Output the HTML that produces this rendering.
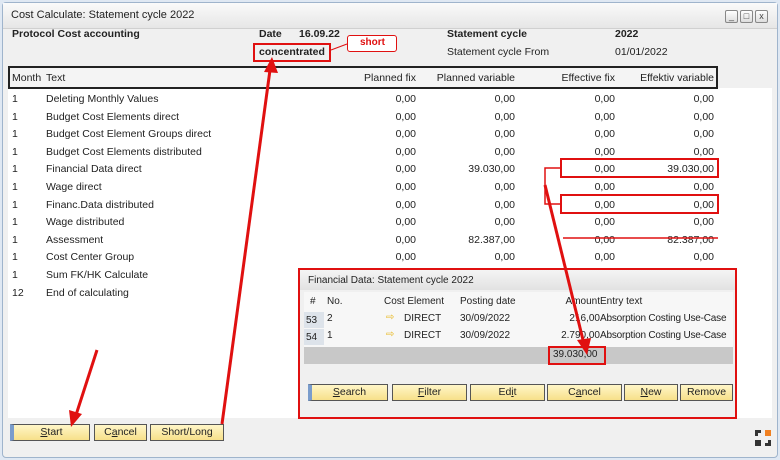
<!DOCTYPE html>
<html><head><style>
*{margin:0;padding:0;box-sizing:border-box}
body{width:780px;height:460px;background:#dfe8f3;font-family:"Liberation Sans",sans-serif;font-size:10.5px;color:#222;position:relative;overflow:hidden}
.win{position:absolute;left:2px;top:2px;width:776px;height:456px;background:#f0f0f0;border:1px solid #9fb4cc;border-radius:4px}
.title{position:absolute;left:0;top:0;width:100%;height:26px;background:linear-gradient(#fafafa,#e6e6e6);border-bottom:1px solid #d0d0d0}
.t{position:absolute;white-space:nowrap}
.b{font-weight:bold}
.r{text-align:right}
.wb{position:absolute;top:7px;width:13px;height:13px;border:1px solid #888;background:linear-gradient(#fff,#ddd);border-radius:2px;font-size:9px;text-align:center;line-height:11px;color:#444}
.white{position:absolute;left:8px;top:88px;width:764px;height:330px;background:#fff}
.hdr{position:absolute;left:8px;top:66px;width:710px;height:23px;border:2px solid #222;background:#f4f4f4}
.btn{position:absolute;height:17px;border:1px solid #555;background:linear-gradient(#fff6c8,#f7e08a);text-align:center;line-height:15px;font-size:10.5px}
.pop{position:absolute;left:298px;top:268px;width:439px;height:151px;background:#f0f0f0;border:2px solid #e01010;font-size:10px}
.rb{position:absolute;border:2px solid #e01010}
</style></head><body>
<div class="win">
<div class="title"><span class="t" style="left:8px;top:6px;font-size:11px">Cost Calculate: Statement cycle 2022</span>
<div class="wb" style="left:722px">_</div><div class="wb" style="left:737px">□</div><div class="wb" style="left:752px">x</div></div>
</div>
<span class="t b" style="left:12px;top:28px">Protocol Cost accounting</span>
<span class="t b" style="left:259px;top:28px">Date</span>
<span class="t b" style="left:299px;top:28px">16.09.22</span>
<span class="t b" style="left:447px;top:28px">Statement cycle</span>
<span class="t b" style="left:615px;top:28px">2022</span>
<span class="t" style="left:447px;top:46px">Statement cycle From</span>
<span class="t" style="left:615px;top:46px">01/01/2022</span>
<div class="rb" style="left:253px;top:43px;width:78px;height:19px"></div>
<span class="t b" style="left:259px;top:46px">concentrated</span>
<div class="rb" style="left:347px;top:35px;width:50px;height:17px;border-width:1px;border-radius:3px;background:#fff"></div>
<span class="t b" style="left:360px;top:37px;color:#e01010;font-size:10px">short</span>
<div class="white"></div>
<div class="hdr"></div>
<span class="t" style="left:12px;top:72px">Month</span><span class="t" style="left:46px;top:72px">Text</span>
<span class="t" style="left:356px;top:72px;width:60px;text-align:right">Planned fix</span>
<span class="t" style="left:420px;top:72px;width:95px;text-align:right">Planned variable</span>
<span class="t" style="left:530px;top:72px;width:85px;text-align:right">Effective fix</span>
<span class="t" style="left:620px;top:72px;width:94px;text-align:right">Effektiv variable</span>
<div id="rows"></div>
<div class="rb" style="left:560px;top:158px;width:159px;height:20px"></div>
<div class="rb" style="left:560px;top:194px;width:159px;height:20px"></div>
<div class="pop">
<div style="position:absolute;left:0;top:0;width:100%;height:20px;background:linear-gradient(#f4f4f4,#e2e2e2)"></div>
<span class="t" style="left:8px;top:5px;font-size:10px">Financial Data: Statement cycle 2022</span>
<div style="position:absolute;left:4px;top:22px;width:429px;height:72px;background:#f7f7f7"></div>
<span class="t" style="left:10px;top:26px">#</span><span class="t" style="left:27px;top:26px">No.</span>
<span class="t" style="left:84px;top:26px">Cost Element</span><span class="t" style="left:160px;top:26px">Posting date</span>
<span class="t" style="left:240px;top:26px;width:60px;text-align:right">Amount</span><span class="t" style="left:300px;top:26px">Entry text</span>
<div style="position:absolute;left:4px;top:42px;width:20px;height:16px;background:#dde3ea"></div>
<div style="position:absolute;left:4px;top:59px;width:20px;height:16px;background:#dde3ea"></div>
<span class="t" style="left:6px;top:45px">53</span><span class="t" style="left:27px;top:43px">2</span>
<span class="t" style="left:86px;top:42px;color:#e8b820">⇨</span><span class="t" style="left:104px;top:43px">DIRECT</span>
<span class="t" style="left:160px;top:43px">30/09/2022</span><span class="t" style="left:240px;top:43px;width:60px;text-align:right">216,00</span>
<span class="t" style="left:300px;top:43px;letter-spacing:-0.2px">Absorption Costing Use-Case</span>
<span class="t" style="left:6px;top:62px">54</span><span class="t" style="left:27px;top:60px">1</span>
<span class="t" style="left:86px;top:59px;color:#e8b820">⇨</span><span class="t" style="left:104px;top:60px">DIRECT</span>
<span class="t" style="left:160px;top:60px">30/09/2022</span><span class="t" style="left:240px;top:60px;width:60px;text-align:right">2.790,00</span>
<span class="t" style="left:300px;top:60px;letter-spacing:-0.2px">Absorption Costing Use-Case</span>
<div style="position:absolute;left:4px;top:77px;width:429px;height:17px;background:#c8c8c8"></div>
<div class="rb" style="left:248px;top:76px;width:58px;height:19px"></div>
<span class="t" style="left:253px;top:79px">39.030,00</span>
<div class="btn" style="left:8px;top:114px;width:80px;border-left:4px solid #7a9ccc"><u>S</u>earch</div>
<div class="btn" style="left:92px;top:114px;width:75px"><u>F</u>ilter</div>
<div class="btn" style="left:170px;top:114px;width:75px">Ed<u>i</u>t</div>
<div class="btn" style="left:247px;top:114px;width:75px">C<u>a</u>ncel</div>
<div class="btn" style="left:324px;top:114px;width:54px"><u>N</u>ew</div>
<div class="btn" style="left:380px;top:114px;width:53px">Remove</div>
</div>
<div class="btn" style="left:10px;top:424px;width:80px;border-left:4px solid #7a9ccc"><u>S</u>tart</div>
<div class="btn" style="left:94px;top:424px;width:53px">C<u>a</u>ncel</div>
<div class="btn" style="left:150px;top:424px;width:74px">Short/Long</div>
<div style="position:absolute;left:755px;top:430px;width:6px;height:6px;border-left:3px solid #333;border-top:3px solid #333"></div>
<div style="position:absolute;left:765px;top:430px;width:6px;height:6px;background:#f08020"></div>
<div style="position:absolute;left:755px;top:440px;width:6px;height:6px;background:#333"></div>
<div style="position:absolute;left:765px;top:440px;width:6px;height:6px;border-right:3px solid #333;border-bottom:3px solid #333"></div>
<svg width="780" height="460" style="position:absolute;left:0;top:0">
<g stroke="#e01010" fill="#e01010">
<line x1="331" y1="50" x2="347" y2="44" stroke-width="1"/>
<line x1="563" y1="238" x2="718" y2="238" stroke-width="1.5"/>
<polyline points="560,168 545,168 545,204 560,204" fill="none" stroke-width="1.5"/>
<line x1="545" y1="185" x2="583" y2="340" stroke-width="3"/>
<polygon points="577,340 591,338 587,355" stroke="none"/>
<line x1="222" y1="424" x2="270" y2="70" stroke-width="3"/>
<polygon points="264,72 278,73 272,57" stroke="none"/>
<line x1="97" y1="350" x2="76" y2="415" stroke-width="3"/>
<polygon points="69,410 82,414 71,427" stroke="none"/>
</g></svg>
<script>
var d=[["1","Deleting Monthly Values","0,00","0,00","0,00","0,00"],["1","Budget Cost Elements direct","0,00","0,00","0,00","0,00"],["1","Budget Cost Element Groups direct","0,00","0,00","0,00","0,00"],["1","Budget Cost Elements distributed","0,00","0,00","0,00","0,00"],["1","Financial Data direct","0,00","39.030,00","0,00","39.030,00"],["1","Wage direct","0,00","0,00","0,00","0,00"],["1","Financ.Data distributed","0,00","0,00","0,00","0,00"],["1","Wage distributed","0,00","0,00","0,00","0,00"],["1","Assessment","0,00","82.387,00","0,00","82.387,00"],["1","Cost Center Group","0,00","0,00","0,00","0,00"],["1","Sum FK/HK Calculate","0,00","","",""],["12","End of calculating","","","",""]];
var h="";d.forEach(function(r,i){var y=93+i*17.6;h+='<span class="t" style="left:12px;top:'+y+'px">'+r[0]+'</span><span class="t" style="left:46px;top:'+y+'px">'+r[1]+'</span>';
[[356,60],[420,95],[530,85],[620,94]].forEach(function(c,j){if(r[j+2])h+='<span class="t r" style="left:'+c[0]+'px;width:'+c[1]+'px;top:'+y+'px">'+r[j+2]+'</span>'})});
document.getElementById("rows").innerHTML=h;
</script>
</body></html>
